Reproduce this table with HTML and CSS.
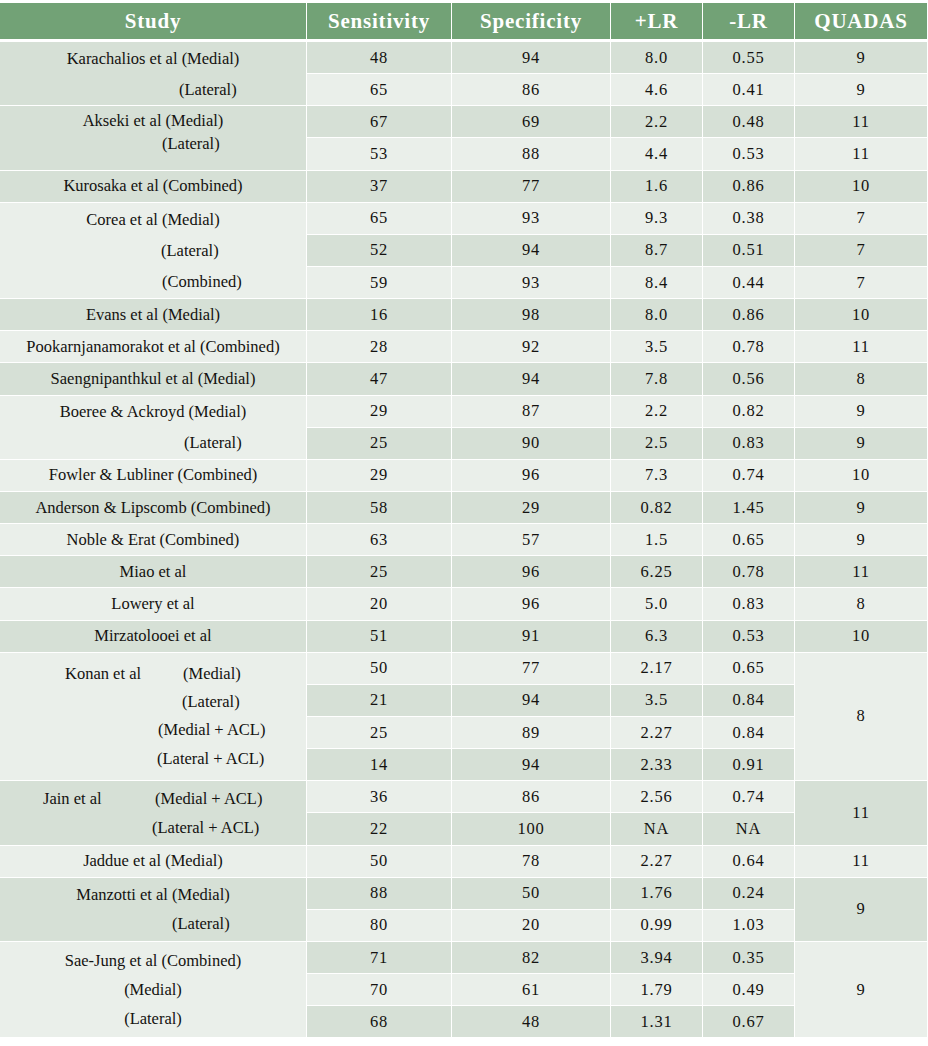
FILE: index.html
```html
<!DOCTYPE html>
<html lang="en">
<head>
<meta charset="utf-8">
<title>Diagnostic accuracy studies</title>
<link rel="stylesheet" href="styles.css">
</head>
<body>
<table class="t">
  <colgroup>
    <col class="c-study"><col class="c-sens"><col class="c-spec"><col class="c-lr"><col class="c-lr"><col class="c-q">
  </colgroup>
  <thead>
    <tr><th>Study</th><th>Sensitivity</th><th>Specificity</th><th>+LR</th><th>-LR</th><th>QUADAS</th></tr>
  </thead>
  <tbody>
    <tr class="d">
      <td class="study cd" rowspan="2"><div class="lines lh31"><div class="ln">Karachalios et al (Medial)</div><div class="ln in p179">(Lateral)</div></div></td>
      <td>48</td><td>94</td><td>8.0</td><td>0.55</td><td>9</td>
    </tr>
    <tr class="l"><td>65</td><td>86</td><td>4.6</td><td>0.41</td><td>9</td></tr>

    <tr class="d">
      <td class="study cd" rowspan="2"><div class="lines lh23 lift"><div class="ln">Akseki et al (Medial)</div><div class="ln in p162">(Lateral)</div></div></td>
      <td>67</td><td>69</td><td>2.2</td><td>0.48</td><td>11</td>
    </tr>
    <tr class="l"><td>53</td><td>88</td><td>4.4</td><td>0.53</td><td>11</td></tr>

    <tr class="d"><td class="study cd">Kurosaka et al (Combined)</td><td>37</td><td>77</td><td>1.6</td><td>0.86</td><td>10</td></tr>

    <tr class="l">
      <td class="study cl" rowspan="3"><div class="lines lh31"><div class="ln">Corea et al (Medial)</div><div class="ln in p161">(Lateral)</div><div class="ln in p162">(Combined)</div></div></td>
      <td>65</td><td>93</td><td>9.3</td><td>0.38</td><td>7</td>
    </tr>
    <tr class="d"><td>52</td><td>94</td><td>8.7</td><td>0.51</td><td>7</td></tr>
    <tr class="l"><td>59</td><td>93</td><td>8.4</td><td>0.44</td><td>7</td></tr>

    <tr class="d"><td class="study cd">Evans et al (Medial)</td><td>16</td><td>98</td><td>8.0</td><td>0.86</td><td>10</td></tr>
    <tr class="l"><td class="study cl">Pookarnjanamorakot et al (Combined)</td><td>28</td><td>92</td><td>3.5</td><td>0.78</td><td>11</td></tr>
    <tr class="d"><td class="study cd">Saengnipanthkul et al (Medial)</td><td>47</td><td>94</td><td>7.8</td><td>0.56</td><td>8</td></tr>

    <tr class="l">
      <td class="study cl" rowspan="2"><div class="lines lh31"><div class="ln">Boeree &amp; Ackroyd (Medial)</div><div class="ln in p184">(Lateral)</div></div></td>
      <td>29</td><td>87</td><td>2.2</td><td>0.82</td><td>9</td>
    </tr>
    <tr class="d"><td>25</td><td>90</td><td>2.5</td><td>0.83</td><td>9</td></tr>

    <tr class="l"><td class="study cl">Fowler &amp; Lubliner (Combined)</td><td>29</td><td>96</td><td>7.3</td><td>0.74</td><td>10</td></tr>
    <tr class="d"><td class="study cd">Anderson &amp; Lipscomb (Combined)</td><td>58</td><td>29</td><td>0.82</td><td>1.45</td><td>9</td></tr>
    <tr class="l"><td class="study cl">Noble &amp; Erat (Combined)</td><td>63</td><td>57</td><td>1.5</td><td>0.65</td><td>9</td></tr>
    <tr class="d"><td class="study cd">Miao et al</td><td>25</td><td>96</td><td>6.25</td><td>0.78</td><td>11</td></tr>
    <tr class="l"><td class="study cl">Lowery et al</td><td>20</td><td>96</td><td>5.0</td><td>0.83</td><td>8</td></tr>
    <tr class="d"><td class="study cd">Mirzatolooei et al</td><td>51</td><td>91</td><td>6.3</td><td>0.53</td><td>10</td></tr>

    <tr class="l">
      <td class="study cl" rowspan="4"><div class="lines lh28"><div class="ln in p65"><span class="nm w-konan">Konan et al</span>(Medial)</div><div class="ln in p182">(Lateral)</div><div class="ln in p158">(Medial + ACL)</div><div class="ln in p157">(Lateral + ACL)</div></div></td>
      <td>50</td><td>77</td><td>2.17</td><td>0.65</td><td class="cl" rowspan="4">8</td>
    </tr>
    <tr class="d"><td>21</td><td>94</td><td>3.5</td><td>0.84</td></tr>
    <tr class="l"><td>25</td><td>89</td><td>2.27</td><td>0.84</td></tr>
    <tr class="d"><td>14</td><td>94</td><td>2.33</td><td>0.91</td></tr>

    <tr class="l">
      <td class="study cd" rowspan="2"><div class="lines lh29"><div class="ln in p43"><span class="nm w-jain">Jain et al</span>(Medial + ACL)</div><div class="ln in p152">(Lateral + ACL)</div></div></td>
      <td>36</td><td>86</td><td>2.56</td><td>0.74</td><td class="cd" rowspan="2">11</td>
    </tr>
    <tr class="d"><td>22</td><td>100</td><td>NA</td><td>NA</td></tr>

    <tr class="l"><td class="study cl">Jaddue et al (Medial)</td><td>50</td><td>78</td><td>2.27</td><td>0.64</td><td>11</td></tr>

    <tr class="d">
      <td class="study cd" rowspan="2"><div class="lines lh29"><div class="ln">Manzotti et al (Medial)</div><div class="ln in p172">(Lateral)</div></div></td>
      <td>88</td><td>50</td><td>1.76</td><td>0.24</td><td class="cd" rowspan="2">9</td>
    </tr>
    <tr class="l"><td>80</td><td>20</td><td>0.99</td><td>1.03</td></tr>

    <tr class="d">
      <td class="study cl" rowspan="3"><div class="lines lh29"><div class="ln">Sae-Jung et al (Combined)</div><div class="ln">(Medial)</div><div class="ln">(Lateral)</div></div></td>
      <td>71</td><td>82</td><td>3.94</td><td>0.35</td><td class="cl" rowspan="3">9</td>
    </tr>
    <tr class="l"><td>70</td><td>61</td><td>1.79</td><td>0.49</td></tr>
    <tr class="d"><td>68</td><td>48</td><td>1.31</td><td>0.67</td></tr>
  </tbody>
</table>
</body>
</html>
```

FILE: styles.css
```css
body {
  margin: 0;
  background: #ffffff;
  font-family: "Liberation Serif", "Times New Roman", serif;
  color: #141210;
}

.t {
  border-collapse: separate;
  border-spacing: 0;
  table-layout: fixed;
  width: 928px;
  margin-top: 3px;
}

.c-study { width: 307px; }
.c-sens { width: 145px; }
.c-spec { width: 159px; }
.c-lr { width: 92px; }
.c-q { width: 133px; }

.t th,
.t td {
  padding: 0;
  border-right: 1px solid #ffffff;
  border-bottom: 1px solid #ffffff;
  text-align: center;
  vertical-align: middle;
  white-space: nowrap;
}

.t thead tr { height: 39px; }

.t th {
  background: #72a276;
  color: #ffffff;
  font-weight: bold;
  font-size: 21px;
  letter-spacing: 0.8px;
  border-bottom: 3px solid #ffffff;
}

.t tbody tr { height: 32.15px; }

.t td {
  font-size: 16.5px;
  letter-spacing: 0.8px;
  line-height: 20px;
}

.t .d td { background: #d6e0d6; }
.t .l td { background: #eaefea; }
.t td.cd { background: #d6e0d6; }
.t td.cl { background: #eaefea; }

.t td.study { letter-spacing: 0; }

.lines { display: block; }
.lh31 .ln { line-height: 31px; }
.lh29 .ln { line-height: 29px; }
.lh28 .ln { line-height: 28.2px; }
.lh23 .ln { line-height: 22.6px; }
.lift { padding-bottom: 10px; }

.ln { text-align: center; }
.ln.in { text-align: left; }

.nm { display: inline-block; }
.w-konan { width: 118px; }
.w-jain { width: 112px; }

.p43 { padding-left: 43px; }
.p65 { padding-left: 65px; }
.p152 { padding-left: 152px; }
.p157 { padding-left: 157px; }
.p158 { padding-left: 158px; }
.p161 { padding-left: 161px; }
.p162 { padding-left: 162px; }
.p172 { padding-left: 172px; }
.p179 { padding-left: 179px; }
.p182 { padding-left: 182px; }
.p184 { padding-left: 184px; }
```
